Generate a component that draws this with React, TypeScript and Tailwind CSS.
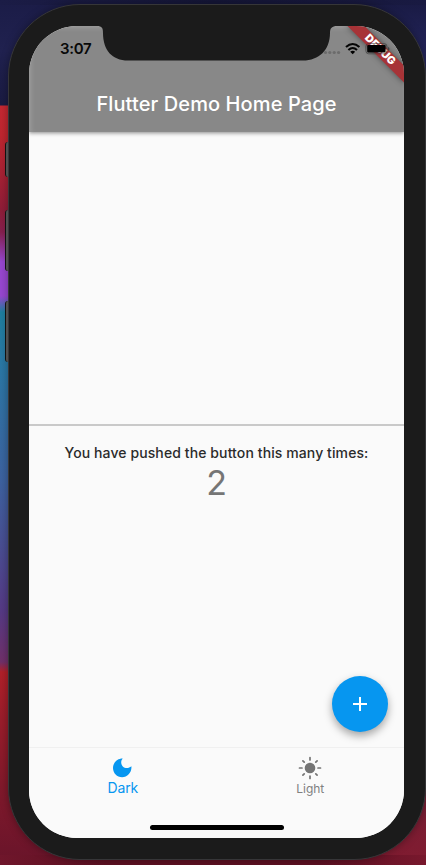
import React from 'react';

function Wallpaper({ children }: { children: React.ReactNode }) {
  return (
    <div className="relative h-[865px] w-[426px] overflow-hidden bg-[linear-gradient(180deg,#1b1c47_0px,#20214f_50px,#1a1b42_105px,#c42832_106px,#c0262f_135px,#8f1d38_210px,#86204e_232px,#9747cf_262px,#9747d0_296px,#1f7f9f_312px,#2b77a5_370px,#3d62a0_480px,#553a85_610px,#70306a_662px,#b22029_672px,#9a1d2b_720px,#7c182b_800px,#68142a_865px)] pl-2 pt-1 font-[Inter,'Liberation_Sans',sans-serif]">
      <div className="absolute right-0 top-0 h-[400px] w-[200px] bg-[linear-gradient(180deg,#191a43,#25265d_60px,#20214f_110px,#302858)]" />
      <div className="absolute left-0 top-0 h-[5px] w-full bg-[linear-gradient(90deg,#1b1c46,#151637_50%,#191a42)]" />
      <div className="absolute bottom-0 right-0 h-[420px] w-[80px] bg-[linear-gradient(180deg,#55304b,#801b30)]" />
      <div className="absolute bottom-0 left-0 h-[10px] w-full bg-[linear-gradient(90deg,#6f162b,#5d1022_25%,#5d1022_75%,#78182d)]" />
      {children}
    </div>
  );
}

function SideButton({ className }: { className: string }) {
  return <div className={`absolute -left-[4px] w-[3px] rounded-l-sm border-l border-[#111] bg-[#505050] ${className}`} />;
}

function Notch() {
  return (
    <svg className="absolute left-[68px] top-0 h-[35px] w-[240px]" viewBox="0 0 240 35" fill="#1b1b1b">
      <path d="M0 0H240C235 0 233 2 233 7C233 24 222 34.5 206 34.5H31C15 34.5 6 24 6 7C6 2 5 0 0 0Z" />
    </svg>
  );
}

function DebugBanner() {
  return (
    <div className="absolute right-0 top-0 h-16 w-16 overflow-hidden">
      <div className="absolute left-[0px] top-[18px] flex h-3 w-20 rotate-45 items-center justify-center bg-[#a73337] text-[10.8px] font-black leading-3 tracking-[0.2px] text-white shadow-[0_0_6px_rgba(0,0,0,0.45)]">
        DEBUG
      </div>
    </div>
  );
}

function StatusIcons() {
  return (
    <svg className="absolute right-0 top-0 h-[50px] w-[90px]" viewBox="314 26 90 50">
      <g fill="#6c6c6c">
        <circle cx="325.5" cy="52.5" r="1.6" />
        <circle cx="329.8" cy="52.5" r="1.6" />
        <circle cx="334.2" cy="52.5" r="1.6" />
        <circle cx="338.6" cy="52.5" r="1.6" />
      </g>
      <g fill="none" stroke="#050505" strokeWidth="2.1">
        <path d="M346 47.1Q352.7 40.9 359.4 47.1" />
        <path d="M348.4 50Q352.7 46 357 50" />
      </g>
      <path d="M350.2 51.7Q352.7 49.7 355.2 51.7L352.7 54.3Z" />
      <rect x="365.9" y="43.6" width="21" height="10.2" rx="2.8" fill="none" stroke="#333" strokeOpacity=".6" />
      <rect x="367.2" y="44.9" width="18.4" height="7.6" rx="1" />
      <path d="M388 47V51Q389.5 50.4 389.5 49T388 47Z" fill="#444" />
    </svg>
  );
}

function AppBar() {
  return (
    <header className="relative z-10 h-[106px] shrink-0 bg-[#888] pt-[65px] text-center shadow-[0_1px_4px_rgba(0,0,0,0.45),inset_2px_2px_5px_rgba(255,255,255,0.18)]">
      <span className="absolute left-[31px] top-[13px] text-[15px] font-semibold leading-5 tracking-[-0.3px] text-[#080808]">3:07</span>
      <h1 className="text-[20px] font-medium leading-[26px] tracking-[0.1px] text-white">Flutter Demo Home Page</h1>
      <DebugBanner />
      <StatusIcons />
    </header>
  );
}

function MoonIcon() {
  return (
    <svg className="-ml-px h-5 w-5" viewBox="0 0 20 20" fill="#0696f0">
      <path d="M10.7 0.6C8.6 3 8.8 6.3 10.8 8.4C13 10.5 16.7 10.6 19.4 8.2C20 14.4 15.6 19.2 10.1 19.2C5 19.2 1 15.1 1 10C1 4.8 5.3 0.5 10.7 0.6Z" />
    </svg>
  );
}

function SunIcon() {
  return (
    <svg className="h-6 w-6" viewBox="0 0 24 24" fill="none" stroke="#757575" strokeWidth="1.7" strokeLinecap="round">
      <circle cx="12" cy="12" r="5.3" fill="#757575" stroke="none" />
      <path d="M12 1.5V4M12 20V22.5M1.5 12H4M20 12H22.5M4.9 4.9L6.2 6.2M17.8 17.8L19.1 19.1M4.9 19.1L6.2 17.8M17.8 6.2L19.1 4.9" />
    </svg>
  );
}

function BottomBar() {
  return (
    <nav className="relative flex h-[91px] shrink-0 border-t border-[#f0f0f0] bg-[#fafafa]">
      <div className="flex flex-1 flex-col items-center pt-[10px] text-[#0696f0]">
        <MoonIcon />
        <span className="text-[14px] font-normal leading-5 tracking-[-0.1px]">Dark</span>
      </div>
      <div className="flex flex-1 flex-col items-center pt-2 text-[#808080]">
        <SunIcon />
        <span className="text-[12px] font-normal leading-[18px]">Light</span>
      </div>
      <div className="absolute bottom-2 left-[120.5px] h-[5px] w-[134px] rounded-full bg-black" />
    </nav>
  );
}

export default function App() {
  return (
    <Wallpaper>
      <div className="relative h-[856px] w-[418px] rounded-[72px] border border-[#363638] bg-[#1b1b1b] pl-5 pt-[21px] shadow-[0_0_8px_rgba(0,0,0,0.35)]">
        <SideButton className="top-[137px] h-[35px]" />
        <SideButton className="top-[205px] h-[61px]" />
        <SideButton className="top-[296px] h-[61px]" />
        <div className="relative flex h-[812px] w-[375px] flex-col overflow-hidden rounded-[48px] bg-[#fafafa]">
          <AppBar />
          <main className="relative flex min-h-0 flex-1 flex-col">
            <div className="h-[292px] shrink-0" />
            <div className="h-[2px] shrink-0 bg-[#c9c9c9]" />
            <div className="pt-[17px] text-center">
              <p className="text-[14px] font-medium leading-5 tracking-[0.1px] text-[#2b2b2b]">You have pushed the button this many times:</p>
              <p className="text-[34px] font-normal leading-[39px] text-[#757575]">2</p>
            </div>
            <button className="absolute bottom-[15px] right-4 flex h-14 w-14 items-center justify-center rounded-full bg-[#0696f0] shadow-[0_4px_8px_rgba(0,0,0,0.35)]">
              <svg className="h-[14px] w-[14px]" viewBox="0 0 14 14" stroke="white" strokeWidth="2">
                <path d="M7 0V14M0 7H14" />
              </svg>
            </button>
          </main>
          <BottomBar />
          <div className="absolute left-0 top-0 z-20">
            <Notch />
          </div>
        </div>
      </div>
    </Wallpaper>
  );
}
